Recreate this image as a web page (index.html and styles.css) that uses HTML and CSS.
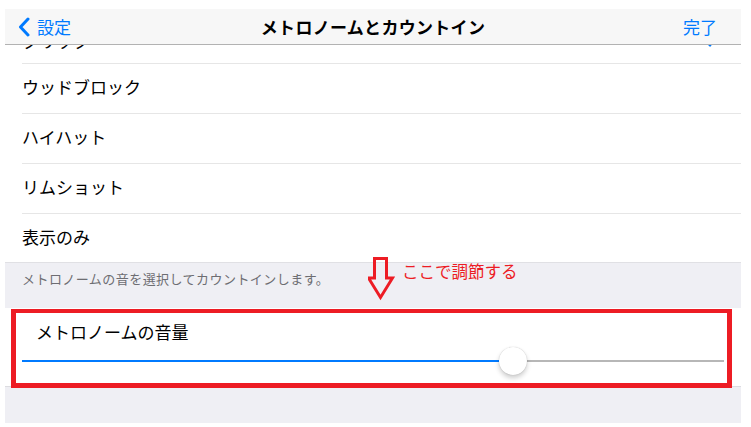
FILE: index.html
```html
<!DOCTYPE html>
<html lang="ja">
<head>
<meta charset="utf-8">
<link rel="stylesheet" href="styles.css">
</head>
<body>
<div class="screen">
  <div class="nav">
    <div class="nav-back">
      <svg class="chev" width="12" height="20" viewBox="0 0 12 20"><path d="M10 2 L2.5 10 L10 18" fill="none" stroke="#007aff" stroke-width="3" stroke-linecap="round" stroke-linejoin="round"/></svg>
      <span>設定</span>
    </div>
    <div class="nav-title">メトロノームとカウントイン</div>
    <div class="nav-done">完了</div>
  </div>

  <div class="list">
    <div class="row first"><span>クリック</span>
      <svg class="check" width="14" height="12" viewBox="0 0 14 12"><path d="M1 6.5 L5 10.5 L13 1" fill="none" stroke="#007aff" stroke-width="2"/></svg>
    </div>
    <div class="row"><span>ウッドブロック</span></div>
    <div class="row"><span>ハイハット</span></div>
    <div class="row"><span>リムショット</span></div>
    <div class="row last"><span>表示のみ</span></div>
  </div>

  <div class="footer">メトロノームの音を選択してカウントインします。</div>

  <div class="slider-cell">
    <div class="slider-label">メトロノームの音量</div>
    <div class="slider">
      <div class="track-fill" style="width:491px"></div>
      <div class="thumb"></div>
      <div class="track-rest"></div>
    </div>
  </div>

  <div class="bottom"></div>

  <div class="annot-box"></div>
  <svg class="annot-arrow" width="27" height="45" viewBox="0 0 27 45"><polygon points="6.5,2.5 18.5,2.5 18.5,22 24.5,22 12.5,41.5 0.5,22 6.5,22" fill="none" stroke="#ed1c24" stroke-width="3" stroke-linejoin="miter"/></svg>
  <div class="annot-text">ここで調節する</div>
</div>
</body>
</html>
```
FILE: styles.css
```css
html, body {
  margin: 0;
  padding: 0;
  background: #ffffff;
}
body {
  font-family: "Noto Sans CJK JP", "Noto Sans", sans-serif;
}
.screen {
  position: relative;
  margin: 9px 10px 4px 5px;
  width: 736px;
  height: 414px;
  background: #efeff4;
  overflow: hidden;
  display: flex;
  flex-direction: column;
}
.nav {
  position: absolute;
  top: 0;
  left: 0;
  right: 0;
  height: 35px;
  background: #f7f7f7;
  border-bottom: 1px solid #b2b2b2;
  display: flex;
  align-items: center;
  justify-content: center;
  z-index: 5;
}
.nav-back {
  position: absolute;
  left: 13px;
  top: 0;
  height: 35px;
  display: flex;
  align-items: center;
  gap: 7px;
  color: #007aff;
  font-size: 17px;
}
.chev { display: block; }
.nav-title {
  font-size: 17px;
  font-weight: 600;
  color: #000;
  letter-spacing: 0.3px;
}
.nav-done {
  position: absolute;
  right: 24px;
  top: 0;
  height: 35px;
  display: flex;
  align-items: center;
  color: #007aff;
  font-size: 17px;
}
.list {
  background: #fff;
  padding-top: 5px;
}
.row {
  height: 50px;
  box-sizing: border-box;
  margin-left: 17px;
  border-bottom: 1px solid #e6e6e6;
  display: flex;
  align-items: center;
  justify-content: space-between;
  padding: 0 22px 4px 0;
  font-size: 17px;
  line-height: 22px;
  color: #000;
}
.row.first {
  padding: 5px 22px 0 0;
}
.row.last {
  height: 49px;
  border-bottom: none;
}
.footer {
  height: 46px;
  box-sizing: border-box;
  padding: 7px 17px 0;
  font-size: 13px;
  letter-spacing: 0.45px;
  line-height: 18px;
  color: #6d6d72;
  border-top: 1px solid #e0e0e4;
  margin-top: -1px;
}
.slider-cell {
  background: #fff;
  height: 78px;
  box-sizing: border-box;
  padding: 13px 17px 0;
}
.slider-label {
  font-size: 17px;
  line-height: 22px;
  margin-left: 14px;
  color: #000;
}
.slider {
  margin-top: 4px;
  height: 28px;
  display: flex;
  align-items: center;
}
.track-fill {
  height: 2px;
  background: #007aff;
  flex: none;
}
.track-rest {
  flex: 1;
  height: 2px;
  background: #b7b7b7;
}
.thumb {
  flex: none;
  position: relative;
  z-index: 2;
  width: 28px;
  height: 28px;
  margin: 0 -14px;
  border-radius: 50%;
  background: #ffffff;
  box-shadow: 0 3px 5px rgba(0,0,0,0.2), 0 0 1px rgba(0,0,0,0.25);
}
.bottom {
  flex: 1;
  border-top: 1px solid #dcdce0;
}
.annot-box {
  position: absolute;
  left: 6px;
  top: 300px;
  width: 721px;
  height: 79px;
  box-sizing: border-box;
  border: 5px solid #ed1c24;
  border-top-width: 4px;
}
.annot-arrow {
  position: absolute;
  left: 363px;
  top: 247px;
}
.annot-text {
  position: absolute;
  left: 397px;
  top: 251px;
  font-size: 16.5px;
  line-height: 22px;
  color: #ed1c24;
}
```
